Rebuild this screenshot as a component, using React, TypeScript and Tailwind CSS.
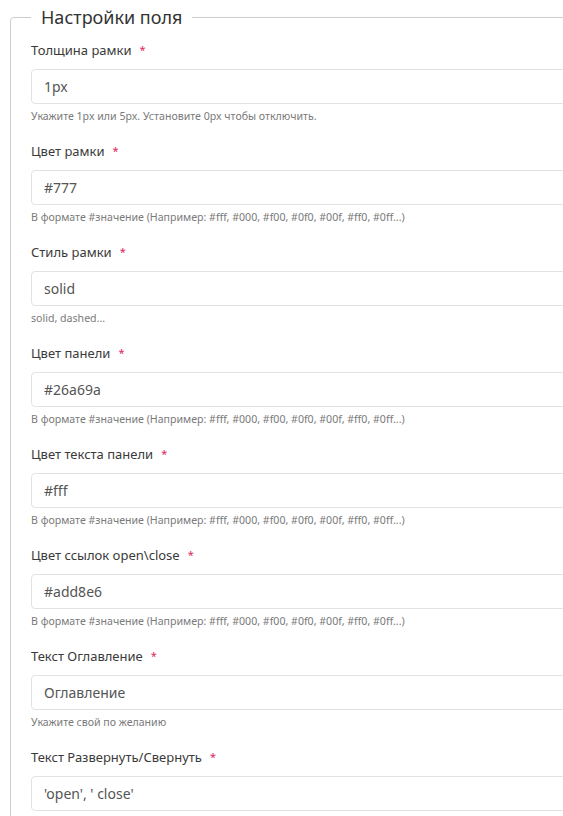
const fields = [
  { label: "Толщина рамки", value: "1px", help: "Укажите 1px или 5px. Установите 0px чтобы отключить." },
  { label: "Цвет рамки", value: "#777", help: "В формате #значение (Например: #fff, #000, #f00, #0f0, #00f, #ff0, #0ff...)" },
  { label: "Стиль рамки", value: "solid", help: "solid, dashed..." },
  { label: "Цвет панели", value: "#26a69a", help: "В формате #значение (Например: #fff, #000, #f00, #0f0, #00f, #ff0, #0ff...)" },
  { label: "Цвет текста панели", value: "#fff", help: "В формате #значение (Например: #fff, #000, #f00, #0f0, #00f, #ff0, #0ff...)" },
  { label: "Цвет ссылок open\\close", value: "#add8e6", help: "В формате #значение (Например: #fff, #000, #f00, #0f0, #00f, #ff0, #0ff...)" },
  { label: "Текст Оглавление", value: "Оглавление", help: "Укажите свой по желанию" },
  { label: "Текст Развернуть/Свернуть", value: "'open', ' close'", help: "" },
];

const Field = ({ label, value, help }: { label: string; value: string; help: string }) => {
  return (
    <div className="mb-[19px]">
      <label className="flex items-center h-[20px] text-[13px] text-[#3a3a3a]">
        {label}
        <span className="ml-[8px] text-[11px] text-[#e0245e] leading-none -mt-[4px]">*</span>
      </label>
      <input
        readOnly
        value={value}
        className="mt-[8px] block w-full h-[35px] px-[12px] rounded-[4px] border border-[#e2e2e2] bg-white text-[14px] text-[#555] outline-none"
      />
      {help && <p className="mt-[5px] h-[14px] leading-[14px] text-[10.6px] text-[#7a7a7a]">{help}</p>}
    </div>
  );
};

export default function App() {
  return (
    <div className="w-full h-[816px] overflow-hidden bg-white" style={{ fontFamily: '"Noto Sans", "Open Sans", sans-serif' }}>
      <fieldset className="ml-[10px] mt-[5px] w-[700px] border border-[#cccccc] rounded-[4px] pl-[20px] pt-[12px]">
        <legend className="px-[10px] h-[24px] leading-[24px] text-[18px] text-[#333]">Настройки поля</legend>
        {fields.map((f) => (
          <Field key={f.label} {...f} />
        ))}
      </fieldset>
    </div>
  );
}
